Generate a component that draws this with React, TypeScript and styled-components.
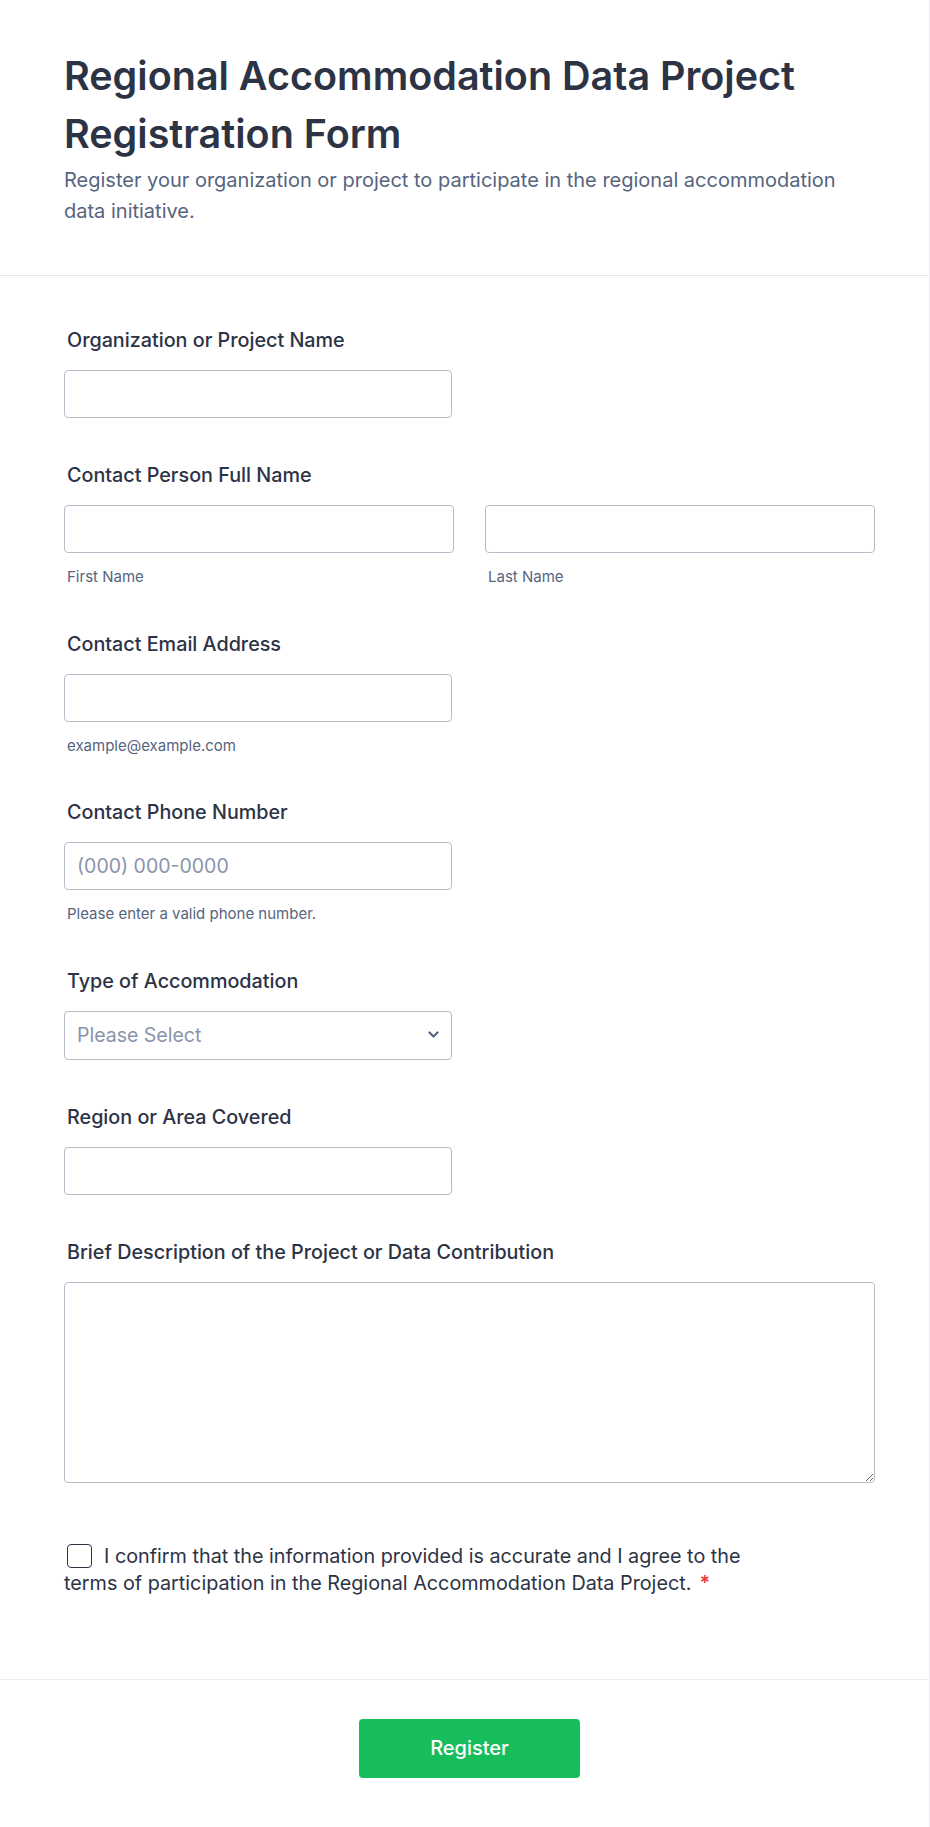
import styled, { createGlobalStyle } from "styled-components";

const GlobalStyle = createGlobalStyle`
  body {
    margin: 0;
    background: #ffffff;
    font-family: Inter, "Noto Sans", sans-serif;
    color: #2c3345;
  }
  * {
    box-sizing: border-box;
  }
`;

const Page = styled.div`
  width: 930px;
  border-right: 1px solid #eceef4;
`;

const Header = styled.header`
  padding: 47px 64px 48px;
  border-bottom: 1px solid #e3e5ee;
`;

const Title = styled.h1`
  margin: 0;
  font-size: 39.5px;
  line-height: 58px;
  font-weight: 600;
  color: #2c3345;
`;

const Subtitle = styled.p`
  margin: 2px 0 0;
  font-size: 20px;
  line-height: 31px;
  color: #57647e;
`;

const Body = styled.div`
  padding: 52px 64px 82px;
  display: flex;
  flex-direction: column;
  gap: 45.4px;
  border-bottom: 1px solid #eceef4;
`;

const Field = styled.div`
  display: flex;
  flex-direction: column;
`;

const Label = styled.label`
  font-size: 19.75px;
  line-height: 24px;
  font-weight: 500;
  color: #2c3345;
  padding-left: 3px;
  margin-bottom: 18px;
`;

const Row = styled.div`
  display: grid;
  grid-template-columns: 1fr 1fr;
  gap: 31px;
  width: 811px;
`;

const Col = styled.div`
  display: flex;
  flex-direction: column;
`;

const TextInput = styled.input<{ $wide?: boolean }>`
  width: ${(p) => (p.$wide ? "100%" : "388px")};
  height: 48px;
  border: 1px solid #b8bdc9;
  border-radius: 4px;
  padding: 0 12px;
  font-family: Inter, "Noto Sans", sans-serif;
  font-size: 19.5px;
  color: #2c3345;
  background: #fff;
  outline: none;
  &::placeholder {
    color: #8894ab;
  }
`;

const Sub = styled.span`
  margin-top: 15px;
  font-size: 15px;
  line-height: 18px;
  color: #57647e;
  padding-left: 3px;
`;

const SelectWrap = styled.div`
  position: relative;
  width: 388px;
`;

const Select = styled.select`
  width: 100%;
  height: 49px;
  border: 1px solid #b8bdc9;
  border-radius: 4px;
  padding: 0 12px;
  font-family: Inter, "Noto Sans", sans-serif;
  font-size: 19.5px;
  color: #8894ab;
  background: #fff;
  appearance: none;
  outline: none;
`;

const Chevron = styled.svg`
  position: absolute;
  right: 13px;
  top: 50%;
  transform: translateY(-50%);
  pointer-events: none;
`;

const TextArea = styled.textarea`
  width: 811px;
  height: 201px;
  border: 1px solid #b8bdc9;
  border-radius: 4px;
  padding: 12px;
  font-family: Inter, "Noto Sans", sans-serif;
  font-size: 19.5px;
  resize: vertical;
  outline: none;
`;

const Consent = styled.p`
  margin: 14px 0 0;
  width: 700px;
  font-size: 19.8px;
  line-height: 27px;
  color: #2c3345;
`;

const Box = styled.input`
  appearance: none;
  display: inline-block;
  vertical-align: -5px;
  width: 25px;
  height: 24px;
  margin: 0 12px 0 3px;
  border: 1.5px solid #2c3345;
  border-radius: 4px;
  background: #fff;
`;

const Star = styled.span`
  color: #f23a3c;
  margin-left: 8px;
  font-weight: 600;
`;

const Footer = styled.div`
  display: flex;
  justify-content: center;
  padding: 39px 0 50px 10px;
`;

const Button = styled.button`
  width: 221px;
  height: 59px;
  border: none;
  border-radius: 4px;
  background: #18bd5b;
  color: #fff;
  font-family: Inter, "Noto Sans", sans-serif;
  font-size: 20px;
  font-weight: 500;
  cursor: pointer;
`;

export default function App() {
  return (
    <Page>
      <GlobalStyle />
      <Header>
        <Title>Regional Accommodation Data Project Registration Form</Title>
        <Subtitle>
          Register your organization or project to participate in the regional
          accommodation data initiative.
        </Subtitle>
      </Header>
      <Body>
        <Field>
          <Label>Organization or Project Name</Label>
          <TextInput type="text" />
        </Field>
        <Field>
          <Label>Contact Person Full Name</Label>
          <Row>
            <Col>
              <TextInput $wide type="text" />
              <Sub>First Name</Sub>
            </Col>
            <Col>
              <TextInput $wide type="text" />
              <Sub>Last Name</Sub>
            </Col>
          </Row>
        </Field>
        <Field>
          <Label>Contact Email Address</Label>
          <TextInput type="email" />
          <Sub>example@example.com</Sub>
        </Field>
        <Field>
          <Label>Contact Phone Number</Label>
          <TextInput type="tel" placeholder="(000) 000-0000" />
          <Sub>Please enter a valid phone number.</Sub>
        </Field>
        <Field>
          <Label>Type of Accommodation</Label>
          <SelectWrap>
            <Select defaultValue="">
              <option value="">Please Select</option>
              <option>Hotel</option>
              <option>Guest House</option>
              <option>Hostel</option>
              <option>Other</option>
            </Select>
            <Chevron width="11" height="8" viewBox="0 0 11 8" fill="none">
              <path d="M1.5 1.5L5.5 5.5l4-4" stroke="#57647e" strokeWidth="2.2" strokeLinecap="round" strokeLinejoin="round" />
            </Chevron>
          </SelectWrap>
        </Field>
        <Field>
          <Label>Region or Area Covered</Label>
          <TextInput type="text" />
        </Field>
        <Field>
          <Label>Brief Description of the Project or Data Contribution</Label>
          <TextArea />
        </Field>
        <Consent>
          <Box type="checkbox" />
          I confirm that the information provided is accurate and I agree to
          the terms of participation in the Regional Accommodation Data
          Project.<Star>*</Star>
        </Consent>
      </Body>
      <Footer>
        <Button type="button">Register</Button>
      </Footer>
    </Page>
  );
}
